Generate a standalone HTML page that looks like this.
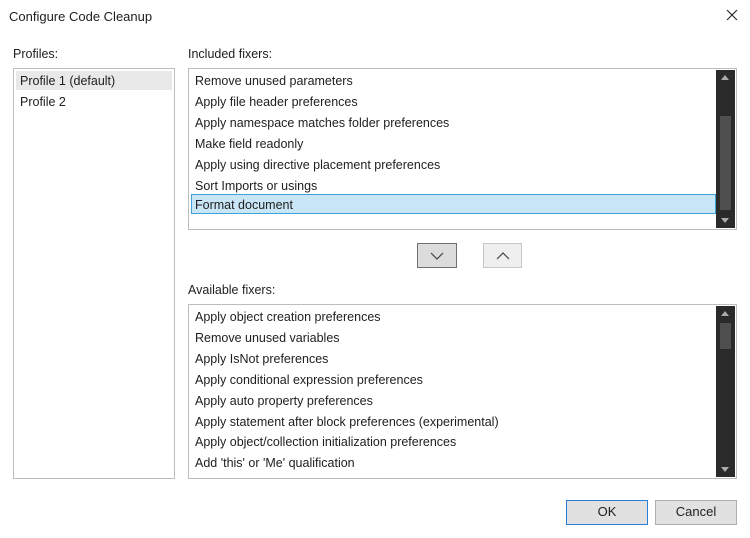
<!DOCTYPE html>
<html><head><style>
body{margin:0;width:750px;height:538px;background:#fff;font-family:"Liberation Sans",sans-serif;font-size:12.5px;color:#1e1e1e;position:relative;overflow:hidden}
.a{position:absolute}
.box{position:absolute;border:1px solid #bdbdbd;background:#fff;box-sizing:border-box}
.row{position:absolute;left:6px;height:21px;line-height:21px;white-space:nowrap}
.sb{position:absolute;top:1px;bottom:1px;right:1px;width:19px;background:#2a2a2a}
.th{position:absolute;left:4px;width:11px;background:#4f4f4f}
.btn{position:absolute;box-sizing:border-box;text-align:center;line-height:22px;font-size:13px}
</style></head><body>
<div class="a" style="left:9px;top:9px;font-size:13px">Configure Code Cleanup</div>
<svg class="a" style="left:726px;top:9px" width="12" height="12" viewBox="0 0 12 12"><path d="M1 1 L11 11 M11 1 L1 11" stroke="#222" stroke-width="1.1"/></svg>
<div class="a" style="left:13px;top:47px">Profiles:</div>
<div class="a" style="left:188px;top:47px">Included fixers:</div>
<div class="box" style="left:13px;top:68px;width:162px;height:411px">
<div class="a" style="left:2px;top:2px;width:156px;height:19px;background:#e8e8e8"></div>
<div class="row" style="top:2px">Profile 1 (default)</div>
<div class="row" style="top:23px">Profile 2</div>
</div>
<div class="box" style="left:188px;top:68px;width:549px;height:162px">
<div class="a" style="left:2px;top:125px;width:525px;height:20px;background:#c9e6f6;border:1px solid #3fa3d8;box-sizing:border-box"></div>
<div class="row" style="top:2px">Remove unused parameters</div>
<div class="row" style="top:23px">Apply file header preferences</div>
<div class="row" style="top:44px">Apply namespace matches folder preferences</div>
<div class="row" style="top:65px">Make field readonly</div>
<div class="row" style="top:86px">Apply using directive placement preferences</div>
<div class="row" style="top:107px">Sort Imports or usings</div>
<div class="row" style="top:126px">Format document</div>
<div class="sb"><div class="th" style="top:46px;height:94px"></div>
<div class="a" style="left:5px;top:5px;border:4px solid transparent;border-bottom:5px solid #aaa;border-top:0"></div>
<div class="a" style="left:5px;bottom:5px;border:4px solid transparent;border-top:5px solid #aaa;border-bottom:0"></div></div>
</div>
<div class="btn" style="left:417px;top:243px;width:40px;height:25px;background:#dcdcdc;border:1px solid #707070">
<svg width="16" height="10" style="margin-top:7px" viewBox="0 0 16 10"><path d="M2 2 L8 8 L14 2" fill="none" stroke="#444" stroke-width="1.2"/></svg></div>
<div class="btn" style="left:483px;top:243px;width:39px;height:25px;background:#efefef;border:1px solid #c6c6c6">
<svg width="16" height="10" style="margin-top:7px" viewBox="0 0 16 10"><path d="M2 8 L8 2 L14 8" fill="none" stroke="#444" stroke-width="1.2"/></svg></div>
<div class="a" style="left:188px;top:283px">Available fixers:</div>
<div class="box" style="left:188px;top:304px;width:549px;height:175px">
<div class="row" style="top:2px">Apply object creation preferences</div>
<div class="row" style="top:23px">Remove unused variables</div>
<div class="row" style="top:44px">Apply IsNot preferences</div>
<div class="row" style="top:65px">Apply conditional expression preferences</div>
<div class="row" style="top:86px">Apply auto property preferences</div>
<div class="row" style="top:107px">Apply statement after block preferences (experimental)</div>
<div class="row" style="top:127px">Apply object/collection initialization preferences</div>
<div class="row" style="top:148px">Add 'this' or 'Me' qualification</div>
<div class="sb"><div class="th" style="top:17px;height:26px"></div>
<div class="a" style="left:5px;top:5px;border:4px solid transparent;border-bottom:5px solid #aaa;border-top:0"></div>
<div class="a" style="left:5px;bottom:5px;border:4px solid transparent;border-top:5px solid #aaa;border-bottom:0"></div></div>
</div>
<div class="btn" style="left:566px;top:500px;width:82px;height:25px;background:#e1e1e1;border:1px solid #2a7fd4">OK</div>
<div class="btn" style="left:655px;top:500px;width:82px;height:25px;background:#e1e1e1;border:1px solid #adadad">Cancel</div>
</body></html>
